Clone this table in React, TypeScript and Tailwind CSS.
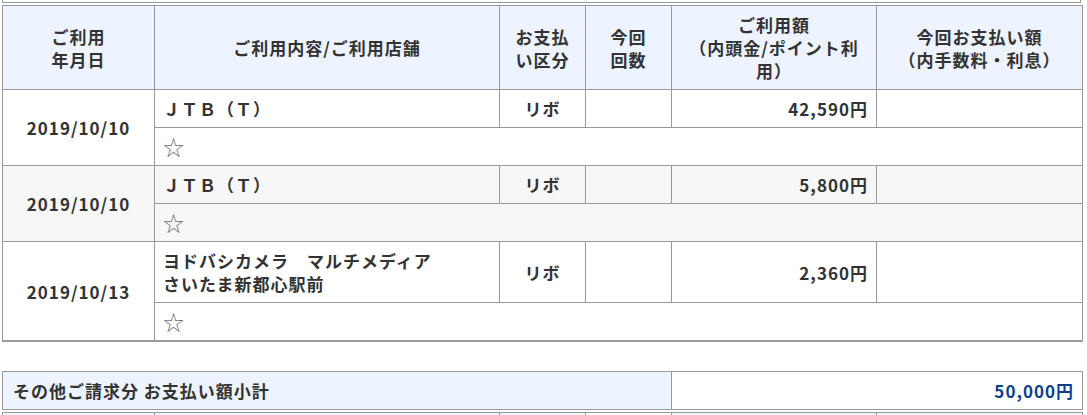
import React from 'react';

interface Row {
  date: string;
  shop: string[];
  kind: string;
  amount: string;
  shaded?: boolean;
}

const rows: Row[] = [
  { date: '2019/10/10', shop: ['ＪＴＢ（Ｔ）'], kind: 'リボ', amount: '42,590円' },
  { date: '2019/10/10', shop: ['ＪＴＢ（Ｔ）'], kind: 'リボ', amount: '5,800円', shaded: true },
  {
    date: '2019/10/13',
    shop: ['ヨドバシカメラ　マルチメディア', 'さいたま新都心駅前'],
    kind: 'リボ',
    amount: '2,360円',
  },
];

const cell = 'border border-[#999] px-2 py-[7px] align-middle';

function Cols() {
  return (
    <colgroup>
      <col className="w-[152px]" />
      <col className="w-[345px]" />
      <col className="w-[86px]" />
      <col className="w-[86px]" />
      <col className="w-[205px]" />
      <col className="w-[206px]" />
    </colgroup>
  );
}

export default function App() {
  return (
    <div className="h-[415px] overflow-hidden bg-white pl-[2px] font-['Noto_Sans_CJK_JP','Noto_Sans',sans-serif] text-[17px] leading-[23px] tracking-[1px] text-[#333]">
      {/* tail of the previous table */}
      <div className="h-[3px] w-[1079px] border-x border-b border-[#999]" />

      <div className="mt-[2px] w-[1081px] border-r border-b border-[#999]">
        <table className="w-[1080px] table-fixed border-collapse font-bold">
          <Cols />
          <thead>
            <tr className="h-[84px] bg-[#eef4ff] text-center">
              <th className={`${cell} font-bold`}>
                ご利用
                <br />
                年月日
              </th>
              <th className={`${cell} font-bold`}>ご利用内容/ご利用店舗</th>
              <th className={`${cell} font-bold`}>
                お支払
                <br />
                い区分
              </th>
              <th className={`${cell} font-bold`}>
                今回
                <br />
                回数
              </th>
              <th className={`${cell} font-bold`}>
                ご利用額
                <br />
                （内頭金/ポイント利
                <br />
                用）
              </th>
              <th className={`${cell} font-bold`}>
                今回お支払い額
                <br />
                （内手数料・利息）
              </th>
            </tr>
          </thead>
          <tbody>
            {rows.map((r, i) => (
              <React.Fragment key={i}>
                <tr className={r.shaded ? 'bg-[#f7f7f7]' : 'bg-white'}>
                  <td rowSpan={2} className={`${cell} text-center`}>
                    {r.date}
                  </td>
                  <td className={cell}>
                    {r.shop.map((s) => (
                      <div key={s}>{s}</div>
                    ))}
                  </td>
                  <td className={`${cell} text-center`}>{r.kind}</td>
                  <td className={cell} />
                  <td className={`${cell} text-right`}>{r.amount}</td>
                  <td className={cell} />
                </tr>
                <tr className={r.shaded ? 'bg-[#f7f7f7]' : 'bg-white'}>
                  <td colSpan={5} className={`${cell} font-normal text-[#6b7280]`}>
                    <div className="h-[23px] overflow-visible text-[21px] leading-[23px]">☆</div>
                  </td>
                </tr>
              </React.Fragment>
            ))}
          </tbody>
        </table>
      </div>

      <table className="mt-[29px] w-[1080px] table-fixed border-collapse font-bold">
        <Cols />
        <tbody>
          <tr>
            <td colSpan={4} className={`${cell} bg-[#eef4ff] px-[10px]`}>
              その他ご請求分 お支払い額小計
            </td>
            <td colSpan={2} className={`${cell} text-right text-[#0b3f8c]`}>
              50,000円
            </td>
          </tr>
        </tbody>
      </table>

      <table className="mt-[2px] w-[1080px] table-fixed border-collapse">
        <Cols />
        <tbody>
          <tr className="h-[30px] bg-[#eef4ff]">
            <td className={cell} />
            <td className={cell} />
            <td className={cell} />
            <td className={`${cell} bg-white`} />
            <td className={cell} />
            <td className={cell} />
          </tr>
        </tbody>
      </table>
    </div>
  );
}
